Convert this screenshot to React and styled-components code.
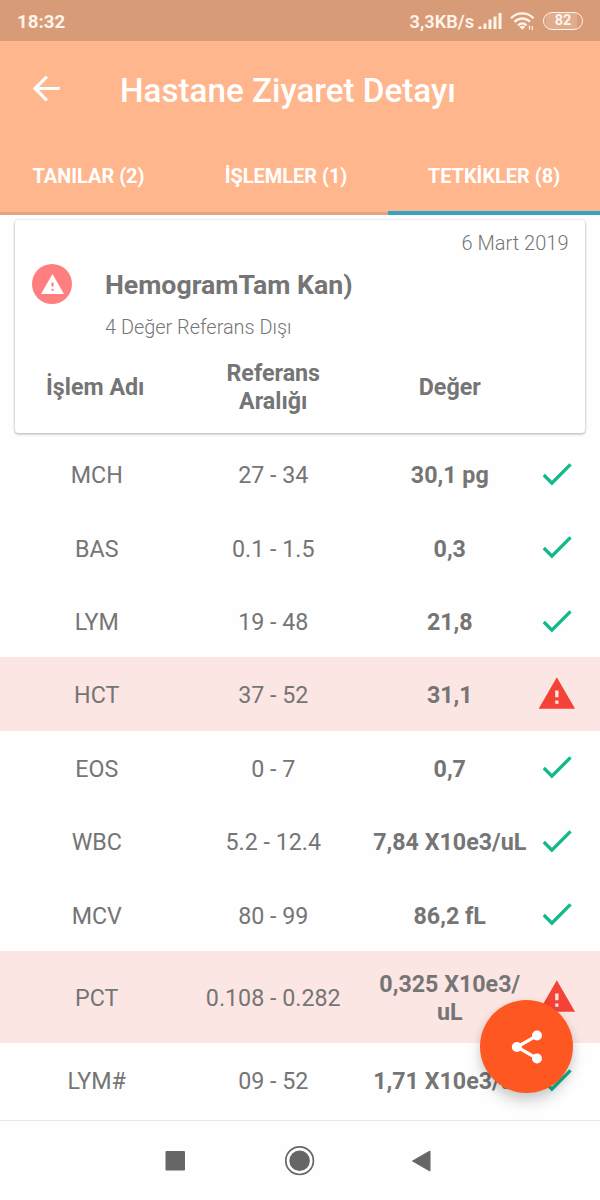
import React from "react";
import styled, { createGlobalStyle } from "styled-components";

const GlobalStyle = createGlobalStyle`
  *, *::before, *::after { box-sizing: border-box; }
  body { margin: 0; background: #fefefe; }
`;

const Screen = styled.div`
  position: relative;
  display: flex;
  flex-direction: column;
  width: 600px;
  height: 1200px;
  overflow: hidden;
  background: #fefefe;
  color: #757575;
  font-family: Roboto, "Liberation Sans", sans-serif;
`;

const StatusBar = styled.header`
  display: flex;
  align-items: center;
  flex: none;
  height: 41px;
  padding: 0 17px;
  background: #d89b77;
  color: #fff3ea;
`;

const Clock = styled.span`
  flex: 1;
  padding-top: 3px;
  font-size: 18.7px;
  font-weight: 700;
  line-height: 22px;
`;

const NetSpeed = styled.span`
  padding-top: 3px;
  margin-right: 4px;
  font-size: 18.2px;
  font-weight: 600;
  line-height: 22px;
`;

const Battery = styled.span`
  width: 40px;
  height: 18px;
  margin-left: 8px;
  border: 1.5px solid #fff3ea;
  border-radius: 9px;
  background: linear-gradient(90deg, transparent 2px, #dfac8d 2px, #dfac8d 33px, transparent 33px);
  font-size: 14.5px;
  font-weight: 700;
  line-height: 16px;
  text-align: center;
`;

const AppBar = styled.div`
  flex: none;
  height: 174px;
  background: #ffb68d;
  color: #fff;
`;

const TitleRow = styled.div`
  display: flex;
  align-items: center;
  height: 95px;
  padding-left: 28px;
`;

const Title = styled.h1`
  margin: 5px 0 0 55px;
  font-size: 33.2px;
  font-weight: 500;
  line-height: 40px;
`;

const Tabs = styled.nav`
  display: grid;
  grid-template-columns: 184px 204px 212px;
  height: 79px;
`;

const Tab = styled.div`
  padding: 28px ${(p) => p.$trim || 0}px 0 0;
  border-bottom: ${(p) => (p.$active ? "4px solid #35a2c3" : "3px solid #e6a27f")};
  font-size: 19.95px;
  font-weight: 700;
  line-height: 24px;
  text-align: center;
  white-space: nowrap;
`;

const Card = styled.section`
  flex: none;
  width: 570px;
  height: 213px;
  margin: 5px 0 4px 15px;
  border-radius: 3px;
  background: #fff;
  box-shadow: 0 1px 3px rgba(0, 0, 0, 0.32), 0 0 1px rgba(0, 0, 0, 0.2);
`;

const VisitDate = styled.div`
  padding: 11px 16.5px 0 0;
  font-size: 20px;
  font-weight: 300;
  line-height: 24px;
  text-align: right;
`;

const Summary = styled.div`
  display: flex;
  padding: 9px 0 0 17px;
`;

const AlertBadge = styled.span`
  display: flex;
  align-items: center;
  justify-content: center;
  width: 40px;
  height: 40px;
  margin-right: 33px;
  border-radius: 50%;
  background: #ff7f80;
`;

const PanelName = styled.h2`
  margin: 6px 0 0;
  font-size: 26.7px;
  font-weight: 700;
  line-height: 30px;
`;

const PanelNote = styled.p`
  margin: 17px 0 0;
  font-size: 19.9px;
  font-weight: 300;
  line-height: 22px;
`;

const columns = "176.5px 176.5px 176.5px 40px";

const ColumnHeads = styled.div`
  display: grid;
  grid-template-columns: ${columns};
  align-items: center;
  height: 56px;
  margin: 20px 0 0 -6.5px;
`;

const Cell = styled.div`
  font-size: 23.25px;
  font-weight: ${(p) => (p.$bold ? 700 : 400)};
  line-height: 28px;
  text-align: center;
  white-space: pre;
  padding-top: ${(p) => p.$drop || 0}px;
  padding-right: ${(p) => p.$trim || 0}px;
`;

const Results = styled.main`
  flex: 1;
  min-height: 0;
  overflow: hidden;
`;

const ResultRow = styled.div`
  display: grid;
  grid-template-columns: ${columns};
  align-items: center;
  height: ${(p) => (p.$tall ? 92 : 73.4)}px;
  padding-left: 8.5px;
  background: ${(p) => (p.$alert ? "#fce6e4" : "transparent")};

  svg {
    margin-left: -1.3px;
  }
`;

const NavBar = styled.footer`
  display: flex;
  align-items: center;
  flex: none;
  height: 80px;
  padding-left: 165px;
  border-top: 1px solid #e6e6e6;
  background: #fefefe;
`;

const NavIcon = styled.svg`
  display: block;
  margin-left: ${(p) => p.$gap || 0}px;
`;

const ShareButton = styled.button`
  position: absolute;
  left: 480px;
  top: 1000px;
  display: flex;
  align-items: center;
  justify-content: center;
  width: 93px;
  height: 93px;
  padding: 0;
  border: 0;
  border-radius: 50%;
  background: #ff5722;
  box-shadow: 0 9px 14px rgba(0, 0, 0, 0.16), 0 2px 8px rgba(0, 0, 0, 0.08);
`;

const WarningIcon = ({ size, color }) => (
  <svg width={size} height={size} viewBox="0 0 24 24" fill={color}>
    <path d="M1 21h22L12 2 1 21zm12-3h-2v-2h2v2zm0-4h-2v-4h2v4z" />
  </svg>
);

const CheckIcon = () => (
  <svg width="39.7" height="39.7" viewBox="0 0 24 24" fill="#12b98c">
    <path d="M9 16.17L4.83 12l-1.42 1.41L9 19 21 7l-1.41-1.41z" />
  </svg>
);

const ShareIcon = () => (
  <svg width="40" height="40" viewBox="0 0 24 24" fill="#fff">
    <path d="M6 12L18 5.2M6 12l12 6.8" fill="none" stroke="#fff" strokeWidth="1.9" />
    <circle cx="5.9" cy="12" r="3" />
    <circle cx="18" cy="5.1" r="3" />
    <circle cx="18" cy="18.9" r="3" />
  </svg>
);

const BackIcon = () => (
  <svg width="37" height="37" viewBox="0 0 24 24" fill="none" stroke="#fff" strokeWidth="2.1">
    <path d="M20.6 12H4.8M12.2 4.3L4.6 12l7.6 7.7" strokeLinejoin="miter" />
  </svg>
);

const SignalIcon = () => (
  <svg width="24" height="18" viewBox="0 0 24 18" fill="#fff3ea">
    <rect x="0.5" y="14.5" width="3" height="2.5" />
    <rect x="5.5" y="11.5" width="3" height="5.5" />
    <rect x="10.5" y="7.5" width="3" height="9.5" />
    <rect x="15.5" y="4.5" width="3" height="12.5" />
    <rect x="20.5" y="1" width="3" height="16" />
  </svg>
);

const WifiIcon = () => (
  <svg width="33" height="20" viewBox="-8 0 33 20" fill="none" stroke="#fff3ea" strokeWidth="2.3">
    <path d="M1 7.2C7.5 0.8 17 0.8 23.5 7.2M4.5 10.8c4.6-4.4 11-4.4 15.5 0M8 14.3c2.6-2.4 6-2.4 8.5 0" />
    <path d="M9.3 15.8c1.8-1.5 4.2-1.5 6 0L12.3 18.8z" fill="#fff3ea" stroke="none" />
    <path d="M19.5 14.5v4M22.3 15v4" strokeWidth="1.2" />
  </svg>
);

const results = [
  { name: "MCH", range: "27 - 34", value: "30,1 pg" },
  { name: "BAS", range: "0.1 - 1.5", value: "0,3" },
  { name: "LYM", range: "19 - 48", value: "21,8" },
  { name: "HCT", range: "37 - 52", value: "31,1", alert: true },
  { name: "EOS", range: "0 - 7", value: "0,7" },
  { name: "WBC", range: "5.2 - 12.4", value: "7,84 X10e3/uL" },
  { name: "MCV", range: "80 - 99", value: "86,2 fL" },
  { name: "PCT", range: "0.108 - 0.282", value: "0,325 X10e3/\nuL", alert: true, tall: true },
  { name: "LYM#", range: "09 - 52", value: "1,71 X10e3/uL" },
];

export default function App() {
  return (
    <Screen>
      <GlobalStyle />
      <StatusBar>
        <Clock>18:32</Clock>
        <NetSpeed>3,3KB/s</NetSpeed>
        <SignalIcon />
        <WifiIcon />
        <Battery>82</Battery>
      </StatusBar>
      <AppBar>
        <TitleRow>
          <BackIcon />
          <Title>Hastane Ziyaret Detayı</Title>
        </TitleRow>
        <Tabs>
          <Tab $trim={7}>TANILAR (2)</Tab>
          <Tab>İŞLEMLER (1)</Tab>
          <Tab $active>TETKİKLER (8)</Tab>
        </Tabs>
      </AppBar>
      <Card>
        <VisitDate>6 Mart 2019</VisitDate>
        <Summary>
          <AlertBadge>
            <WarningIcon size={25} color="#fff" />
          </AlertBadge>
          <div>
            <PanelName>HemogramTam Kan)</PanelName>
            <PanelNote>4 Değer Referans Dışı</PanelNote>
          </div>
        </Summary>
        <ColumnHeads>
          <Cell $bold $trim={3}>İşlem Adı</Cell>
          <Cell $bold>{"Referans\nAralığı"}</Cell>
          <Cell $bold>Değer</Cell>
        </ColumnHeads>
      </Card>
      <Results>
        {results.map((r) => (
          <ResultRow key={r.name} $alert={r.alert} $tall={r.tall}>
            <Cell $drop={3}>{r.name}</Cell>
            <Cell $drop={3}>{r.range}</Cell>
            <Cell $bold $drop={3}>{r.value}</Cell>
            {r.alert ? <WarningIcon size={39.7} color="#f44336" /> : <CheckIcon />}
          </ResultRow>
        ))}
      </Results>
      <NavBar>
        <NavIcon width="20" height="20" viewBox="0 0 20 20">
          <rect x="0.5" y="0" width="19.5" height="19.5" rx="1" fill="#666" />
        </NavIcon>
        <NavIcon width="30" height="30" viewBox="0 0 30 30" $gap={99.5}>
          <circle cx="14.6" cy="14.7" r="13.8" fill="none" stroke="#666" strokeWidth="1.7" />
          <circle cx="14.6" cy="14.7" r="10.3" fill="#666" />
        </NavIcon>
        <NavIcon width="20" height="22" viewBox="0 0 20 22" $gap={96}>
          <path d="M1.5 11L19 1v20z" fill="#666" stroke="#666" strokeLinejoin="round" />
        </NavIcon>
      </NavBar>
      <ShareButton aria-label="Paylaş">
        <ShareIcon />
      </ShareButton>
    </Screen>
  );
}
